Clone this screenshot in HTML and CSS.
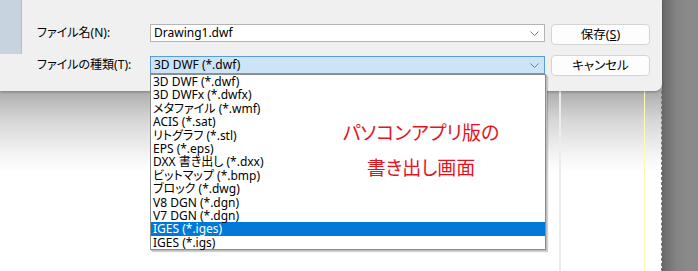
FILE: index.html
```html
<!DOCTYPE html>
<html lang="ja">
<head>
<meta charset="utf-8">
<title>ファイル保存</title>
<link rel="stylesheet" href="styles.css">
</head>
<body>
<div class="screen">
  <div class="workspace">
    <div class="dialog">
      <div class="side-pane"></div>
      <label class="field-label r1">ファイル名(N):</label>
      <div class="combo r1"><span>Drawing1.dwf</span><svg class="chev" width="9" height="5" viewBox="0 0 9 5"><polyline points="0.5,0.5 4.5,4.5 8.5,0.5" fill="none" stroke="#7a7a7a" stroke-width="1"/></svg></div>
      <button class="btn r1">保存(<u>S</u>)</button>
      <label class="field-label r2">ファイルの種類(T):</label>
      <div class="combo combo-focus r2"><span>3D DWF (*.dwf)</span><svg class="chev" width="9" height="5" viewBox="0 0 9 5"><polyline points="0.5,0.5 4.5,4.5 8.5,0.5" fill="none" stroke="#7a7a7a" stroke-width="1"/></svg></div>
      <button class="btn r2">キャンセル</button>
      <ul class="dropdown">
        <li>3D DWF (*.dwf)</li>
        <li>3D DWFx (*.dwfx)</li>
        <li>メタファイル (*.wmf)</li>
        <li>ACIS (*.sat)</li>
        <li>リトグラフ (*.stl)</li>
        <li>EPS (*.eps)</li>
        <li>DXX 書き出し (*.dxx)</li>
        <li>ビットマップ (*.bmp)</li>
        <li>ブロック (*.dwg)</li>
        <li>V8 DGN (*.dgn)</li>
        <li>V7 DGN (*.dgn)</li>
        <li class="selected">IGES (*.iges)</li>
        <li>IGES (*.igs)</li>
      </ul>
    </div>
    <div class="canvas">
      <div class="sheet"><p class="note">パソコンアプリ版の<br>書き出し画面</p></div>
      <div class="margin-a"></div>
      <div class="margin-b"></div>
    </div>
  </div>
  <div class="backdrop"></div>
</div>
</body>
</html>
```

FILE: styles.css
```css
html, body {
  margin: 0;
  padding: 0;
}
body {
  width: 698px;
  height: 271px;
  overflow: hidden;
  font-family: "Noto Sans", "Noto Sans CJK JP", sans-serif;
  font-size: 12px;
  color: #000;
}
.screen {
  display: grid;
  grid-template-columns: 662px 1fr;
  height: 271px;
}
.workspace {
  display: flex;
  flex-direction: column;
  background: linear-gradient(#adadad 91px, #d6d6d6 120px, #f4f4f4 155px, #ffffff 172px);
}
.backdrop {
  background: linear-gradient(to right, #686868, #838383 14px, #8a8a8a 24px);
}
.dialog {
  position: relative;
  z-index: 2;
  height: 91px;
  flex: none;
  background: #f0f0f0;
  border-bottom-right-radius: 7px;
  box-shadow: 0 1px 3px rgba(0,0,0,0.28);
  display: grid;
  grid-template-columns: 22px 15px 113px 395px 6px 99px 1fr;
  grid-template-rows: 24px 21px 10px 22px 1fr;
}
.side-pane {
  grid-column: 1;
  grid-row: 1 / 4;
  height: 54px;
  background: #c7d3df;
  border-right: 1px solid #b3bfcc;
  box-sizing: border-box;
}
.field-label {
  grid-column: 3;
  align-self: start;
  line-height: 18px;
  font-size: 12px;
  white-space: nowrap;
  font-feature-settings: "palt";
}
.r1 { grid-row: 2; }
.r2 { grid-row: 4; margin-top: 1px; }
.combo {
  grid-column: 4;
  align-self: start;
  height: 18px;
  box-sizing: border-box;
  border: 1px solid #b4b4b4;
  background: #fff;
  display: flex;
  align-items: center;
  justify-content: space-between;
  padding: 0 5px 0 3px;
  line-height: 16px;
}
.combo-focus {
  background: #cce4f7;
  border-color: #5a9bd8;
}
.chev {
  display: block;
}
.btn {
  grid-column: 6;
  align-self: start;
  height: 21px;
  margin: 0;
  padding: 0;
  border: 1px solid #d4d4d4;
  border-radius: 4px;
  background: #fdfdfd;
  font-family: inherit;
  font-size: 12.5px;
  line-height: 19px;
  color: #000;
  font-feature-settings: "palt";
}
.r2.btn { margin-top: 0; }
.dropdown {
  position: absolute;
  left: 150px;
  top: 74px;
  width: 396px;
  box-sizing: border-box;
  margin: 0;
  padding: 0;
  list-style: none;
  background: #fff;
  border: 1px solid #8c8c8c;
  box-shadow: 1px 1px 0 #bdbdbd, 2px 2px 1px rgba(0,0,0,0.18);
}
.dropdown li {
  height: 13.4px;
  line-height: 13.4px;
  padding-left: 2px;
  white-space: nowrap;
  font-feature-settings: "palt";
}
.dropdown li.selected {
  background: #0078d7;
  color: #fff;
}
.canvas {
  flex: 1;
  display: flex;
}
.sheet {
  width: 559px;
  box-sizing: border-box;
  padding: 23px 0 0 283px;
  display: flex;
  justify-content: center;
  align-items: flex-start;
}
.note {
  position: relative;
  z-index: 3;
  margin: 0;
  color: #e5131d;
  font-family: "Noto Sans CJK JP", sans-serif;
  font-size: 19px;
  line-height: 35px;
  text-align: center;
  white-space: nowrap;
  font-feature-settings: "palt";
}
.margin-a {
  width: 83px;
  border-left: 2px solid #ececec;
}
.margin-b {
  width: 16px;
  border-left: 1px solid #fbfbb4;
  border-right: 1px dashed #7a7a7a;
}
```
